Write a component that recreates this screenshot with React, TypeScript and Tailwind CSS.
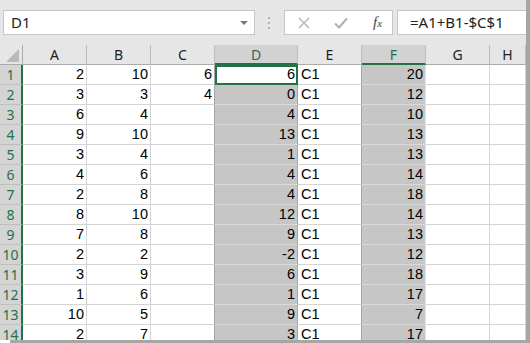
const columns = [
  { key: "A", selected: false, align: "right" },
  { key: "B", selected: false, align: "right" },
  { key: "C", selected: false, align: "right" },
  { key: "D", selected: true, align: "right" },
  { key: "E", selected: false, align: "left" },
  { key: "F", selected: true, align: "right" },
  { key: "G", selected: false, align: "right" },
  { key: "H", selected: false, align: "right" },
];

const rows: (string | number)[][] = [
  [2, 10, 6, 6, "C1", 20],
  [3, 3, 4, 0, "C1", 12],
  [6, 4, "", 4, "C1", 10],
  [9, 10, "", 13, "C1", 13],
  [3, 4, "", 1, "C1", 13],
  [4, 6, "", 4, "C1", 14],
  [2, 8, "", 4, "C1", 18],
  [8, 10, "", 12, "C1", 14],
  [7, 8, "", 9, "C1", 13],
  [2, 2, "", -2, "C1", 12],
  [3, 9, "", 6, "C1", 18],
  [1, 6, "", 1, "C1", 17],
  [10, 5, "", 9, "C1", 7],
  [2, 7, "", 3, "C1", 17],
];

const cellFont = { fontFamily: "'Liberation Sans', Arial, sans-serif" };

function cellClass(col: number) {
  // border after C, D, E is darker next to the selected columns
  if (col === 3) return "bg-[#c6c6c6] border-b border-r border-[#dadada] border-r-[#a6a6a6]";
  if (col === 5) return "bg-[#c6c6c6] border-b border-r border-[#dadada] border-r-[#e4e4e4]";
  if (col === 2 || col === 4) return "bg-white border-b border-r border-[#d4d4d4] border-r-[#a6a6a6]";
  return "bg-white border-b border-r border-[#d4d4d4]";
}

export default function App() {
  return (
    <div className="flex w-[530px] h-[343px] bg-white overflow-hidden">
      <div className="flex flex-col w-[526px] h-full">
        {/* Formula bar */}
        <div className="flex items-center h-[45px] shrink-0 bg-[#e6e6e6] pl-[3px]">
          <div className="flex items-center justify-between w-[252px] h-[25px] bg-white border border-[#c6c6c6] pl-[7px] pr-[4px]">
            <span className="text-[15px] text-[#222]" style={{ fontFamily: "'Noto Sans', sans-serif" }}>
              D1
            </span>
            <svg width="12" height="8" viewBox="0 0 12 8">
              <path d="M2 2 L10 2 L6 6 Z" fill="#7a7a7a" />
            </svg>
          </div>
          <div className="flex flex-col gap-[3px] ml-[13px] mr-[14px]">
            <div className="w-[2px] h-[2px] bg-[#b4b4b4]" />
            <div className="w-[2px] h-[2px] bg-[#b4b4b4]" />
            <div className="w-[2px] h-[2px] bg-[#b4b4b4]" />
          </div>
          <div className="flex items-center w-[109px] h-[25px] bg-white border border-[#c6c6c6]">
            <svg width="14" height="14" viewBox="0 0 14 14" className="ml-[12px]">
              <path d="M2 2 L12 12 M12 2 L2 12" stroke="#b8b8b8" strokeWidth="1.5" />
            </svg>
            <svg width="16" height="14" viewBox="0 0 16 14" className="ml-[22px]">
              <path d="M2 7.5 L6 11.5 L14 2.5" stroke="#b0b0b0" strokeWidth="2" fill="none" />
            </svg>
            <span
              className="ml-[24px] text-[15px] italic text-[#444]"
              style={{ fontFamily: "'Liberation Serif', 'Times New Roman', serif" }}
            >
              f<span className="text-[11px]">x</span>
            </span>
          </div>
          <div className="flex items-center flex-1 h-[25px] bg-white border border-r-0 border-[#c6c6c6] ml-[4px] pl-[12px]">
            <span className="text-[15px] text-[#222]" style={{ fontFamily: "'Noto Sans', sans-serif" }}>
              =A1+B1-$C$1
            </span>
          </div>
        </div>

        {/* Sheet grid */}
        <div className="h-[295px] overflow-hidden">
          <div className="grid grid-cols-[23px_64px_64px_64px_83px_64px_64px_64px_36px]">
            {/* Corner */}
            <div className="relative h-[20px] bg-[#e6e6e6] border-b border-r border-[#ababab]">
              <svg width="13" height="13" viewBox="0 0 13 13" className="absolute right-[3px] bottom-[2px]">
                <path d="M13 0 L13 13 L0 13 Z" fill="#b9b9b9" />
              </svg>
            </div>
            {columns.map((c) => (
              <div
                key={c.key}
                className={`flex items-center justify-center h-[20px] text-[14px] border-r border-[#bdbdbd] ${
                  c.selected
                    ? "bg-[#d2d2d2] text-[#217346] border-b-2 border-b-[#217346]"
                    : "bg-[#e6e6e6] text-[#222] border-b border-b-[#ababab]"
                }`}
                style={{ fontFamily: "'Noto Sans', sans-serif" }}
              >
                {c.key}
              </div>
            ))}

            {rows.map((row, r) => (
              <div key={r} className="contents">
                <div
                  className="flex items-center justify-center h-[20px] bg-[#d4d4d4] border-b border-[#bfbfbf] border-r-2 border-r-[#217346] text-[14px] text-[#217346]"
                  style={{ fontFamily: "'Noto Sans', sans-serif" }}
                >
                  {r + 1}
                </div>
                {columns.map((c, i) => {
                  const v = row[i] ?? "";
                  if (r === 0 && i === 3) {
                    return (
                      <div
                        key={c.key}
                        className="flex items-center justify-end h-[20px] bg-white border-2 border-[#217346] pr-px text-[14.5px] text-black"
                        style={cellFont}
                      >
                        {v}
                      </div>
                    );
                  }
                  return (
                    <div
                      key={c.key}
                      className={`flex items-center h-[20px] pt-px text-[14.5px] text-black ${
                        c.align === "left" ? "justify-start pl-[3px]" : "justify-end pr-[2px]"
                      } ${cellClass(i)}`}
                      style={cellFont}
                    >
                      {v}
                    </div>
                  );
                })}
              </div>
            ))}
          </div>
        </div>
        <div className="h-[3px] ml-[10px] bg-[#a6a6a6]" />
      </div>
      <div className="w-[4px] h-full bg-[#a6a6a6]" />
    </div>
  );
}
